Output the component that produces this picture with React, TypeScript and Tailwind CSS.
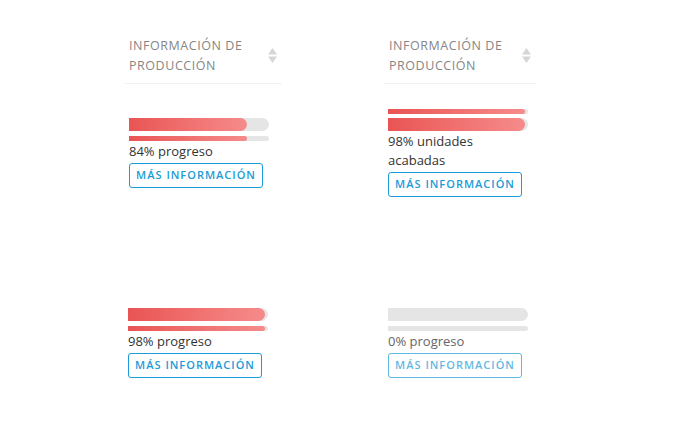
import React from 'react';

type Cell = {
  pct: number;
  label: string;
  thinFirst?: boolean;
  muted?: boolean;
};

function SortIcon() {
  return (
    <svg width="9" height="15" viewBox="0 0 9 15" className="mt-[12px] shrink-0">
      <path d="M4.5 0 L9 6.5 H0 Z" fill="#d6d6d6" />
      <path d="M0 8.5 H9 L4.5 15 Z" fill="#d6d6d6" />
    </svg>
  );
}

function Header() {
  return (
    <div className="flex justify-between items-start px-[5px] pb-[7px] border-b border-[#f3f3f3]">
      <span className="text-[12.5px] leading-[20px] tracking-[0.55px] uppercase text-[#858585]">
        Información de
        <br />
        producción
      </span>
      <SortIcon />
    </div>
  );
}

function ThickBar({ pct }: { pct: number }) {
  return (
    <div className="h-[13px] w-full bg-[#e5e5e5] rounded-r-full overflow-hidden">
      {pct > 0 && (
        <div
          className="h-full rounded-r-full bg-gradient-to-r from-[#e95454] to-[#f58b8b]"
          style={{ width: `${pct}%` }}
        />
      )}
    </div>
  );
}

function ThinBar({ pct }: { pct: number }) {
  return (
    <div className="h-[5px] w-full bg-[#e5e5e5] rounded-r-[3px] overflow-hidden">
      {pct > 0 && (
        <div
          className="h-full rounded-r-[3px] bg-gradient-to-r from-[#e95454] to-[#f58b8b]"
          style={{ width: `${pct}%` }}
        />
      )}
    </div>
  );
}

function ProgressCell({ pct, label, thinFirst, muted }: Cell) {
  return (
    <div className="w-[140px] flex flex-col">
      {thinFirst ? (
        <>
          <ThinBar pct={pct} />
          <div className="h-[4px]" />
          <ThickBar pct={pct} />
        </>
      ) : (
        <>
          <ThickBar pct={pct} />
          <div className="h-[5px]" />
          <ThinBar pct={pct} />
        </>
      )}
      <p className={`text-[13px] leading-[19px] mt-[1px] ${muted ? 'text-[#666]' : 'text-[#333]'}`}>{label}</p>
      <button
        className={`mt-[2px] w-[134px] h-[25px] border border-[#1b9bd7] rounded-[3px] text-[11px] font-semibold tracking-[1px] uppercase text-[#1b9bd7] bg-white ${muted ? 'opacity-70' : ''}`}
      >
        Más información
      </button>
    </div>
  );
}

export default function App() {
  return (
    <div
      className="w-[684px] h-[431px] overflow-hidden bg-white pt-[36px] pl-[124px]"
      style={{ fontFamily: '"Open Sans", "Noto Sans", sans-serif' }}
    >
      <div className="grid grid-cols-[158px_152px] gap-x-[102px]">
        <Header />
        <Header />

        <div className="h-[138px] flex items-center pl-[5px]">
          <ProgressCell pct={84} label="84% progreso" />
        </div>
        <div className="h-[138px] flex items-center pl-[4px]">
          <ProgressCell pct={98} label="98% unidades acabadas" thinFirst />
        </div>

        <div className="h-[241px] flex items-center pl-[4px]">
          <ProgressCell pct={98} label="98% progreso" />
        </div>
        <div className="h-[241px] flex items-center pl-[4px]">
          <ProgressCell pct={0} label="0% progreso" muted />
        </div>
      </div>
    </div>
  );
}
